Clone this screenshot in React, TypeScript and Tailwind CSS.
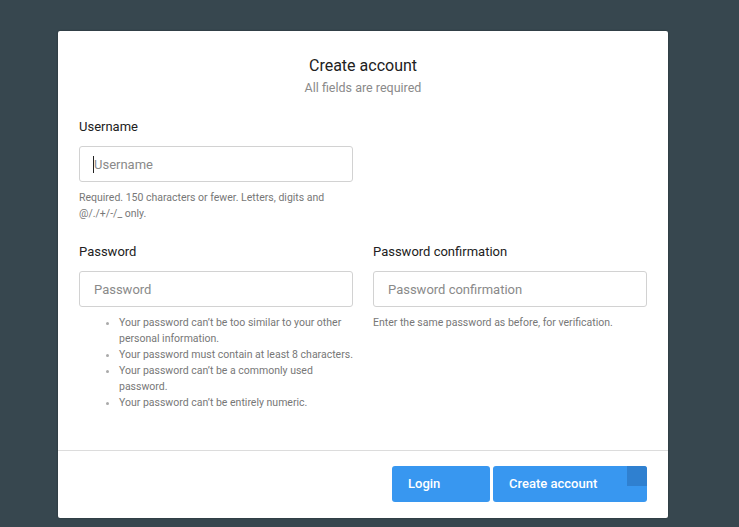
import React from 'react';

const hints = [
  "Your password can’t be too similar to your other personal information.",
  'Your password must contain at least 8 characters.',
  "Your password can’t be a commonly used password.",
  "Your password can’t be entirely numeric.",
];

function Field({ label, placeholder, type = 'text', caret = false }: { label: string; placeholder: string; type?: string; caret?: boolean }) {
  return (
    <div>
      <label className="block text-[13px] leading-[18px] text-[#212121]">{label}</label>
      <div className="relative mt-[10px]">
        <input
          type={type}
          placeholder={placeholder}
          className="h-[36px] w-full rounded-[3px] border border-[#d2d2d2] bg-white px-[14px] text-[13px] text-[#333] placeholder:text-[#8a8a8a] outline-none"
        />
        {caret && <span className="absolute left-[14px] top-[10px] h-[17px] w-px bg-[#222]" />}
      </div>
    </div>
  );
}

export default function App() {
  return (
    <div
      className="min-h-[527px] w-full bg-[#37474f] pt-[31px] pl-[58px]"
      style={{ fontFamily: 'Roboto, "Liberation Sans", sans-serif' }}
    >
      <div className="w-[610px] h-[487px] bg-white rounded-[2px] shadow-[0_0_2px_rgba(0,0,0,0.4)] flex flex-col">
        <div className="flex-1 px-[21px] pt-[23px]">
          <div className="text-center">
            <h1 className="text-[16px] leading-[24px] text-[#212121]">Create account</h1>
            <p className="text-[12.5px] leading-[20px] text-[#8a8a8a]">All fields are required</p>
          </div>

          <div className="mt-[20px] grid grid-cols-2 gap-x-[20px]">
            <div>
              <Field label="Username" placeholder="Username" caret />
              <p className="mt-[8px] text-[10.5px] leading-[16px] text-[#777]">
                Required. 150 characters or fewer. Letters, digits and @/./+/-/_ only.
              </p>
            </div>
            <div />
          </div>

          <div className="mt-[21px] grid grid-cols-2 gap-x-[20px]">
            <div>
              <Field label="Password" placeholder="Password" type="password" />
              <ul className="mt-[8px] list-disc pl-[40px] text-[10.5px] leading-[16px] text-[#777] marker:text-[#aaa]">
                {hints.map((h) => (
                  <li key={h}>{h}</li>
                ))}
              </ul>
            </div>
            <div>
              <Field label="Password confirmation" placeholder="Password confirmation" type="password" />
              <p className="mt-[8px] text-[10.5px] leading-[16px] text-[#777]">
                Enter the same password as before, for verification.
              </p>
            </div>
          </div>
        </div>

        <div className="border-t border-[#dcdcdc] h-[68px] px-[21px] pt-[15px] flex justify-end gap-[3px]">
          <button className="h-[36px] w-[98px] rounded-[3px] bg-[#3897f0] text-left pl-[16px] text-[13px] font-medium text-white">
            Login
          </button>
          <button className="relative h-[36px] w-[154px] rounded-[3px] bg-[#3897f0] text-left pl-[16px] text-[13px] font-medium text-white">
            Create account
            <span className="absolute right-0 top-0 h-[20px] w-[20px] rounded-tr-[3px] bg-[#2f80d0]" />
          </button>
        </div>
      </div>
    </div>
  );
}
